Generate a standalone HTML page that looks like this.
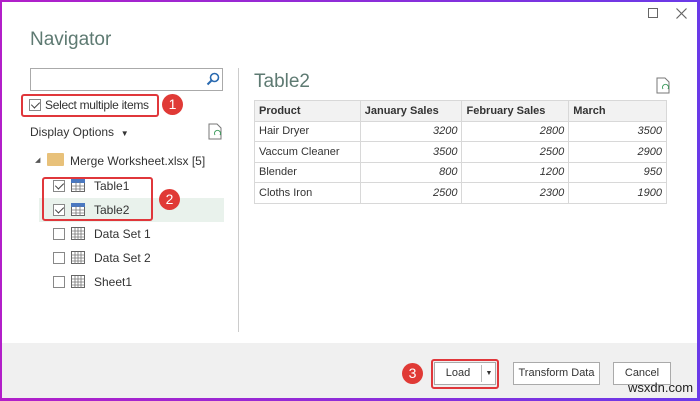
<!DOCTYPE html>
<html><head><style>
*{margin:0;padding:0;box-sizing:border-box}
body{width:700px;height:401px;position:relative;overflow:hidden;font-family:"Liberation Sans",sans-serif;background:linear-gradient(90deg,#b21fc9,#6a3ae8)}
#w{position:absolute;left:2px;top:2px;width:695px;height:396px;background:#fff;overflow:hidden}
.a{position:absolute}
.t{font-size:12px;color:#333;white-space:nowrap}
.cb{position:absolute;width:12px;height:12px;border:1px solid #888;background:#fff}
.cb.c::after{content:"";position:absolute;left:3px;top:0px;width:4px;height:7px;border:solid #444;border-width:0 1.3px 1.3px 0;transform:rotate(45deg)}
.badge{position:absolute;width:21px;height:21px;border-radius:50%;background:#e03a36;color:#fff;font-size:14px;text-align:center;line-height:21px}
.red{position:absolute;border:2px solid #e0373b;border-radius:3px}
table{border-collapse:collapse;font-size:11px;color:#333}
td{border:1px solid #d8d8d8;height:20.5px;padding:0 4px}
td.n{text-align:right;font-style:italic}
tr.h td{background:#f2f2f2;font-weight:bold}
.btn{position:absolute;height:23px;border:1px solid #aaa;background:#fff;font-size:11px;color:#333;text-align:center;line-height:21px}
</style></head><body><div id="w">
<div class="a" style="left:28px;top:27px;font-size:19px;color:#5e7a72">Navigator</div>
<div class="a" style="left:646px;top:6px;width:10px;height:10px;border:1px solid #666"></div>
<svg class="a" style="left:674px;top:6px" width="11" height="11"><path d="M0.5 0.5L10.5 10.5M10.5 0.5L0.5 10.5" stroke="#666" stroke-width="1.2"/></svg>
<div class="a" style="left:28px;top:66px;width:193px;height:23px;border:1px solid #aaa"></div>
<svg class="a" style="left:204px;top:70px" width="14" height="14"><circle cx="8.5" cy="5.5" r="4" fill="none" stroke="#2a6ab0" stroke-width="1.6"/><line x1="5.5" y1="8.5" x2="1.5" y2="12.5" stroke="#2a6ab0" stroke-width="2"/></svg>
<div class="red" style="left:19px;top:92px;width:138px;height:23px"></div>
<div class="cb c" style="left:27px;top:97px"></div>
<div class="a t" style="left:43px;top:96px;font-size:12px;letter-spacing:-0.3px">Select multiple items</div>
<div class="badge" style="left:160px;top:92px">1</div>
<div class="a t" style="left:28px;top:123px">Display Options &nbsp;<span style="font-size:8px">▼</span></div>
<svg class="a" style="left:206px;top:121px" width="14" height="17"><path d="M1 1h8l4 4v11H1z" fill="none" stroke="#777"/><path d="M7 12a3 3 0 1 1 5 0" fill="none" stroke="#3a9a5a"/></svg>
<div class="a" style="left:33px;top:154px;font-size:7px;color:#555">◢</div>
<div class="a" style="left:45px;top:151px;width:17px;height:13px;background:#e8c17a;border-radius:1px"></div>
<div class="a t" style="left:68px;top:152px">Merge Worksheet.xlsx [5]</div>
<div class="a" style="left:37px;top:196px;width:185px;height:24px;background:#e9f2ec"></div>
<div class="red" style="left:40px;top:175px;width:111px;height:44px"></div>
<div class="badge" style="left:157px;top:187px">2</div>
<svg width="0" height="0" style="position:absolute"><defs>
<g id="tb"><rect x="0.5" y="0.5" width="13" height="12" fill="#fff" stroke="#666"/><rect x="0.5" y="0.5" width="13" height="3" fill="#4a78c0" stroke="#4a78c0"/><path d="M0.5 7h13M0.5 10h13M5 3v10M9 3v10" stroke="#777" stroke-width=".8"/></g>
<g id="ds"><rect x="0.5" y="0.5" width="13" height="12" fill="#fff" stroke="#666"/><path d="M0.5 4h13M0.5 7h13M0.5 10h13M4 1v12M7 1v12M10 1v12" stroke="#777" stroke-width=".8"/></g></defs></svg>
<div class="cb c" style="left:51px;top:178px"></div><svg class="a" style="left:69px;top:177px" width="15" height="14"><use href="#tb"/></svg><div class="a t" style="left:92px;top:177px">Table1</div>
<div class="cb c" style="left:51px;top:202px"></div><svg class="a" style="left:69px;top:201px" width="15" height="14"><use href="#tb"/></svg><div class="a t" style="left:92px;top:201px">Table2</div>
<div class="cb" style="left:51px;top:226px"></div><svg class="a" style="left:69px;top:225px" width="15" height="14"><use href="#ds"/></svg><div class="a t" style="left:92px;top:225px">Data Set 1</div>
<div class="cb" style="left:51px;top:250px"></div><svg class="a" style="left:69px;top:249px" width="15" height="14"><use href="#ds"/></svg><div class="a t" style="left:92px;top:249px">Data Set 2</div>
<div class="cb" style="left:51px;top:274px"></div><svg class="a" style="left:69px;top:273px" width="15" height="14"><use href="#ds"/></svg><div class="a t" style="left:92px;top:273px">Sheet1</div>
<div class="a" style="left:236px;top:66px;width:1px;height:264px;background:#ccc"></div>
<div class="a" style="left:252px;top:69px;font-size:19px;color:#5e7a72">Table2</div>
<svg class="a" style="left:654px;top:75px" width="14" height="17"><path d="M1 1h8l4 4v11H1z" fill="none" stroke="#777"/><path d="M7 12a3 3 0 1 1 5 0" fill="none" stroke="#3a9a5a"/></svg>
<table class="a" style="left:252px;top:98px;width:413px">
<colgroup><col style="width:106px"><col style="width:102px"><col style="width:107px"><col style="width:98px"></colgroup>
<tr class="h"><td>Product</td><td>January Sales</td><td>February Sales</td><td>March</td></tr>
<tr><td>Hair Dryer</td><td class="n">3200</td><td class="n">2800</td><td class="n">3500</td></tr>
<tr><td>Vaccum Cleaner</td><td class="n">3500</td><td class="n">2500</td><td class="n">2900</td></tr>
<tr><td>Blender</td><td class="n">800</td><td class="n">1200</td><td class="n">950</td></tr>
<tr><td>Cloths Iron</td><td class="n">2500</td><td class="n">2300</td><td class="n">1900</td></tr>
</table>
<div class="a" style="left:0;top:341px;width:695px;height:60px;background:#f0f0f0"></div>
<div class="badge" style="left:400px;top:361px">3</div>
<div class="red" style="left:429px;top:357px;width:68px;height:30px"></div>
<div class="btn" style="left:432px;top:360px;width:62px"><span style="position:absolute;left:0;width:46px">Load</span><span style="position:absolute;left:46px;top:2px;height:17px;border-left:1px solid #bbb;width:15px;font-size:7px;line-height:17px">▼</span></div>
<div class="btn" style="left:511px;top:360px;width:87px">Transform Data</div>
<div class="btn" style="left:611px;top:360px;width:58px">Cancel</div>
<div class="a" style="left:626px;top:378px;font-size:13px;color:#222">wsxdn.com</div>
</div></body></html>
